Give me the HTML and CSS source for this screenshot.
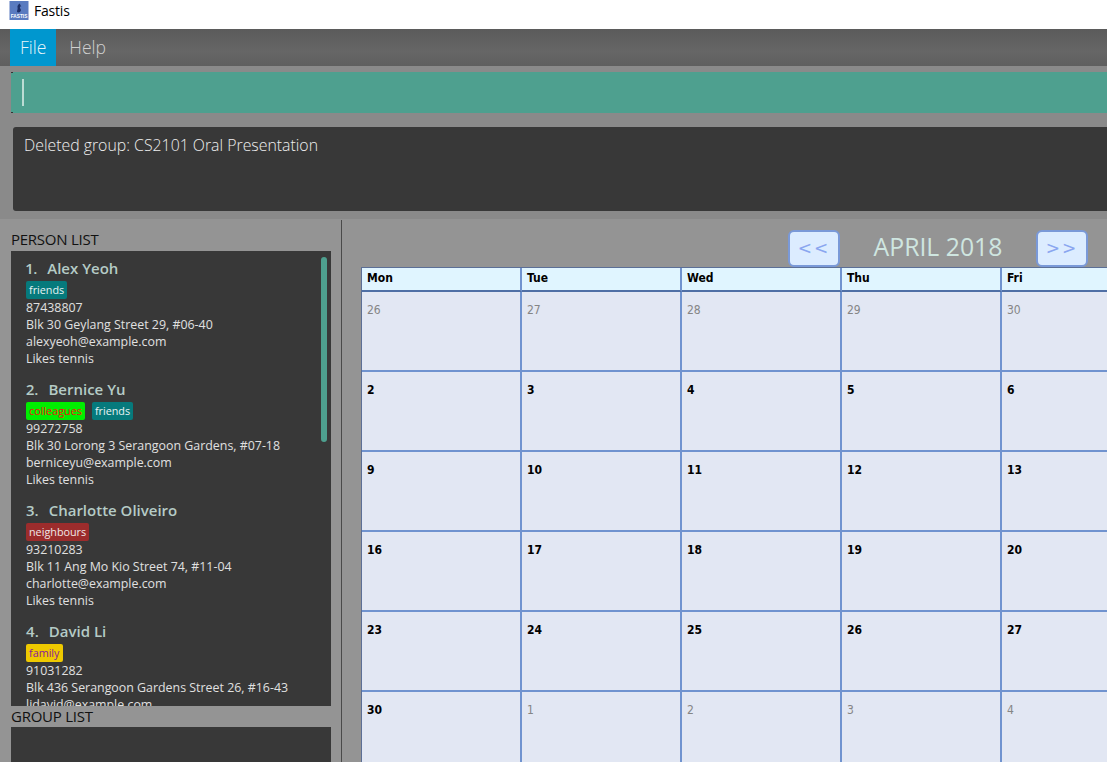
FILE: index.html
```html
<!DOCTYPE html>
<html lang="en">
<head>
<meta charset="utf-8">
<title>Fastis</title>
<link rel="stylesheet" href="styles.css">
</head>
<body>
<div class="app">
  <header class="titlebar">
    <svg class="logo" viewBox="0 0 20 20" aria-hidden="true">
      <rect width="20" height="20" fill="#5a7bc0"/>
      <path d="M11 2.500 C9 3.500 8 5 8.500 7 C9 9 7.500 10 8 11.500 C9 12.500 11.500 12 12 10 C12.400 8.500 10.500 7.500 11 6 L12.500 5.500 L11.500 4.500 Z" fill="#1d2f66"/>
      <text x="10" y="18.300" class="logo-text">FASTIS</text>
    </svg>
    <span class="app-name">Fastis</span>
  </header>

  <nav class="menubar">
    <span class="menu-item active">File</span>
    <span class="menu-item">Help</span>
  </nav>

  <section class="top">
    <div class="command"><span class="caret"></span></div>
    <div class="result">Deleted group: CS2101 Oral Presentation</div>
  </section>

  <main class="split">
    <aside class="side">
      <h2 class="list-title">PERSON LIST</h2>
      <div class="list persons">
        <span class="scroll-thumb"></span>
        <article class="card">
          <h3 class="name"><span class="idx">1.</span>Alex Yeoh</h3>
          <div class="tags"><span class="tag friends">friends</span></div>
          <p>87438807</p><p>Blk 30 Geylang Street 29, #06-40</p><p>alexyeoh@example.com</p><p>Likes tennis</p>
        </article>
        <article class="card">
          <h3 class="name"><span class="idx">2.</span>Bernice Yu</h3>
          <div class="tags"><span class="tag colleagues">colleagues</span><span class="tag friends">friends</span></div>
          <p>99272758</p><p>Blk 30 Lorong 3 Serangoon Gardens, #07-18</p><p>berniceyu@example.com</p><p>Likes tennis</p>
        </article>
        <article class="card">
          <h3 class="name"><span class="idx">3.</span>Charlotte Oliveiro</h3>
          <div class="tags"><span class="tag neighbours">neighbours</span></div>
          <p>93210283</p><p>Blk 11 Ang Mo Kio Street 74, #11-04</p><p>charlotte@example.com</p><p>Likes tennis</p>
        </article>
        <article class="card">
          <h3 class="name"><span class="idx">4.</span>David Li</h3>
          <div class="tags"><span class="tag family">family</span></div>
          <p>91031282</p><p>Blk 436 Serangoon Gardens Street 26, #16-43</p><p>lidavid@example.com</p>
        </article>
      </div>
      <h2 class="list-title group-title">GROUP LIST</h2>
      <div class="list groups"></div>
    </aside>

    <section class="calendar">
      <div class="cal-nav">
        <button class="nav-btn" type="button">&lt;&lt;</button>
        <span class="month">APRIL 2018</span>
        <button class="nav-btn" type="button">&gt;&gt;</button>
      </div>
      <div class="grid">
        <div class="head">Mon</div><div class="head">Tue</div><div class="head">Wed</div><div class="head">Thu</div><div class="head">Fri</div>
        <div class="day other">26</div><div class="day other">27</div><div class="day other">28</div><div class="day other">29</div><div class="day other">30</div>
        <div class="day">2</div><div class="day">3</div><div class="day">4</div><div class="day">5</div><div class="day">6</div>
        <div class="day">9</div><div class="day">10</div><div class="day">11</div><div class="day">12</div><div class="day">13</div>
        <div class="day">16</div><div class="day">17</div><div class="day">18</div><div class="day">19</div><div class="day">20</div>
        <div class="day">23</div><div class="day">24</div><div class="day">25</div><div class="day">26</div><div class="day">27</div>
        <div class="day">30</div><div class="day other">1</div><div class="day other">2</div><div class="day other">3</div><div class="day other">4</div>
      </div>
    </section>
  </main>
</div>
</body>
</html>
```
FILE: styles.css
```css
* { box-sizing: border-box; }
html, body { margin: 0; padding: 0; height: 100%; overflow: hidden; }
body { font-family: "Open Sans", "Noto Sans", sans-serif; background: #949494; }

.app { width: 1107px; height: 762px; display: flex; flex-direction: column; overflow: hidden; }

.titlebar { height: 29px; flex: none; background: #fff; display: flex; align-items: flex-start; padding: 1px 0 0 9px; }
.logo { width: 20px; height: 19px; flex: none; }
.logo-text { font: bold 5px "Liberation Sans", sans-serif; fill: #fff; text-anchor: middle; }
.app-name { margin-left: 5px; font-size: 14px; line-height: 20px; color: #000; letter-spacing: -0.2px; }

.menubar { height: 37px; flex: none; display: flex; padding-left: 10px; background: linear-gradient(#5b5b5b, #666 60%, #5f5f5f); }
.menu-item { padding: 0 10px 0 13px; font-size: 17.500px; line-height: 37px; color: #d0d0d0; font-weight: 300; }
.menu-item.active { padding: 0 10px; background: #0097cf; color: #e6f5fa; }

.top { height: 153px; flex: none; background: #8a8a8a; padding: 6px 0 0 11px; }
.command {
  height: 41px; padding: 7px 0 0 11px;
  background:
    linear-gradient(#333, #333) 0 0 / 2px 1px no-repeat,
    linear-gradient(#333, #333) 0 100% / 2px 1px no-repeat,
    #4ea08f;
}
.caret { display: block; width: 2px; height: 27px; background: #bcdcd4; }
.result { height: 84px; margin: 14px 0 0 2px; padding: 7px 11px; background: #383838; border-radius: 3px 0 0 3px; color: #efefef; font-size: 15.850px; line-height: 22px; font-weight: 300; }

.split { flex: 1; min-height: 0; display: flex; background: #949494; }
.side { width: 342px; flex: none; padding: 11px 10px 0 11px; border-right: 1px solid #4a4a4a; margin-top: 1px; display: flex; flex-direction: column; }
.list-title { margin: 0; font-size: 15px; line-height: 17px; font-weight: 400; color: #111; letter-spacing: -0.25px; white-space: nowrap; }
.group-title { margin-top: 2px; }
.list { background: #383838; margin-top: 3px; }
.persons { position: relative; height: 455px; flex: none; overflow: hidden; padding: 7px 0 0 15px; }
.groups { flex: 1; margin-top: 2px; }
.scroll-thumb { position: absolute; left: 310px; top: 6px; width: 6px; height: 185px; border-radius: 3px; background: #4ea08f; }

.card { height: 121px; }
.card p { margin: 0; font-size: 12.400px; line-height: 17px; color: #e0e0e0; white-space: nowrap; }
.name { margin: 0; height: 20px; font-size: 15px; line-height: 20px; font-weight: 600; color: #b5cbc6; white-space: nowrap; font-variant-numeric: proportional-nums; }
.idx { margin-right: 10px; }
.tags { display: flex; gap: 7px; margin: 3px 0 0; height: 18px; }
.tag { height: 18px; padding: 0 3px; border-radius: 2px; font-size: 10.800px; line-height: 18px; }
.friends { background: #067a7c; color: #e8f4f4; }
.colleagues { background: #00ee00; color: #f01010; }
.neighbours { background: #9c2c2c; color: #f0e8e8; }
.family { background: #eec900; color: #8a1a9a; }

.calendar { flex: 1; min-width: 0; overflow: hidden; padding: 11px 0 0 19px; }
.cal-nav { display: flex; align-items: center; height: 37px; padding-left: 427px; }
.nav-btn { width: 52px; height: 37px; padding: 0; border: 2px solid #7a99d8; border-radius: 6px; background: #dcecff; color: #8aa6f0; font: 17px/1 "DejaVu Sans", sans-serif; letter-spacing: 2px; }
.month { width: 196px; padding-bottom: 6px; text-align: center; color: #cfe6e0; font-size: 24.800px; line-height: 34px; font-weight: 400; }
.grid { display: grid; grid-template-columns: repeat(5, 160px); grid-template-rows: 24px repeat(6, 80px); border-top: 1px solid #5c6f96; border-left: 1px solid #5c6f96; width: 801px; }
.head { background: #e0f5ff; border-right: 2px solid #7093cf; border-bottom: 2px solid #4f6fa5; padding: 1px 0 0 5px; font: bold 12px/19px "DejaVu Sans Condensed", "DejaVu Sans", sans-serif; font-stretch: condensed; color: #000; }
.day { background: #e2e7f3; border-right: 2px solid #7093cf; border-bottom: 2px solid #7093cf; padding: 9px 0 0 5px; font: bold 12px/18px "DejaVu Sans Condensed", "DejaVu Sans", sans-serif; font-stretch: condensed; color: #000; }
.day.other { color: #858585; font-weight: 400; }
```
